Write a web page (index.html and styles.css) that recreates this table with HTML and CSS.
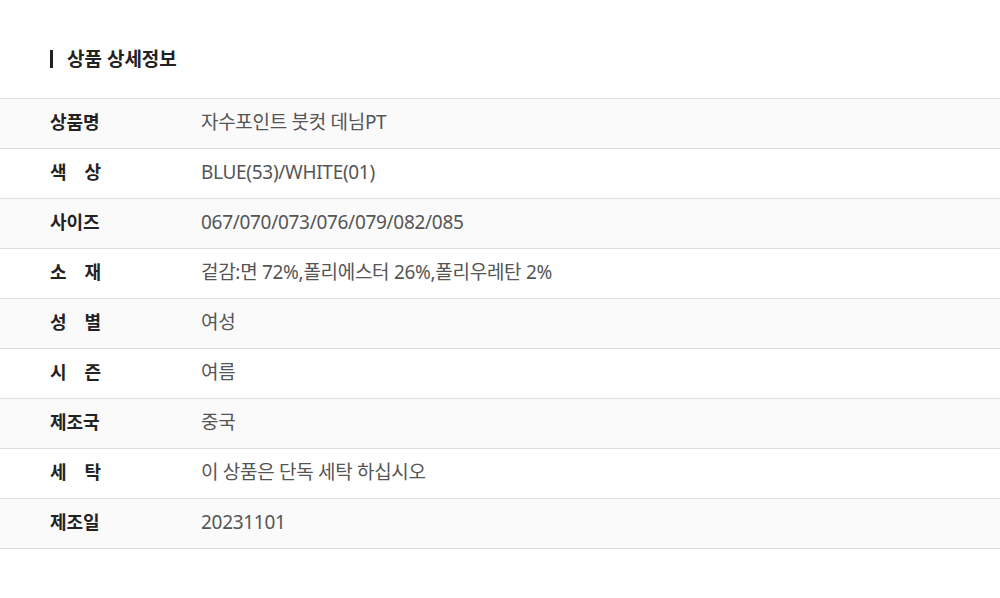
FILE: index.html
```html
<!DOCTYPE html>
<html lang="ko">
<head>
    <meta charset="UTF-8">
    <meta name="viewport" content="width=device-width, initial-scale=1.0">
    <title>상품 상세정보</title>
    <link rel="stylesheet" href="styles.css">
</head>
<body>

<div class="detail">
    <h2 class="detail-title">상품 상세정보</h2>
    <table class="info-table">
        <tbody>
            <tr><th><span class="label">상품명</span></th><td>자수포인트 붓컷 데님PT</td></tr>
            <tr><th><span class="label">색 상</span></th><td>BLUE(53)/WHITE(01)</td></tr>
            <tr><th><span class="label">사이즈</span></th><td>067/070/073/076/079/082/085</td></tr>
            <tr><th><span class="label">소 재</span></th><td>겉감:면 72%,폴리에스터 26%,폴리우레탄 2%</td></tr>
            <tr><th><span class="label">성 별</span></th><td>여성</td></tr>
            <tr><th><span class="label">시 즌</span></th><td>여름</td></tr>
            <tr><th><span class="label">제조국</span></th><td>중국</td></tr>
            <tr><th><span class="label">세 탁</span></th><td>이 상품은 단독 세탁 하십시오</td></tr>
            <tr><th><span class="label">제조일</span></th><td>20231101</td></tr>
        </tbody>
    </table>
</div>

</body>
</html>
```

FILE: styles.css
```css
body {
    font-family: "Noto Sans", "Noto Sans CJK KR", sans-serif;
    margin: 0;
    padding: 0;
    background-color: #fff;
    color: #222;
}

.detail {
    padding: 47px 0 50px;
}

.detail-title {
    margin: 0 0 27px 50px;
    font-size: 19px;
    font-weight: 700;
    line-height: 24px;
}

.detail-title::before {
    content: "";
    display: inline-block;
    width: 3px;
    height: 18px;
    background: #222;
    margin-right: 14px;
    vertical-align: -2px;
}

.info-table {
    width: 100%;
    border-collapse: collapse;
    border-top: 1px solid #ddd;
}

.info-table tr {
    border-bottom: 1px solid #ddd;
}

.info-table tr:nth-child(odd) {
    background-color: #fafafa;
}

.info-table th, .info-table td {
    height: 45px;
    padding: 0 0 4px;
    line-height: 24px;
    text-align: left;
    vertical-align: middle;
}

.info-table th {
    width: 201px;
    padding-left: 50px;
    box-sizing: border-box;
}

.label {
    display: block;
    width: 51px;
    font-size: 18px;
    font-weight: 700;
    color: #222;
    text-align: justify;
    text-align-last: justify;
}

.info-table td {
    font-size: 19px;
    color: #555;
    letter-spacing: -0.3px;
}
```
